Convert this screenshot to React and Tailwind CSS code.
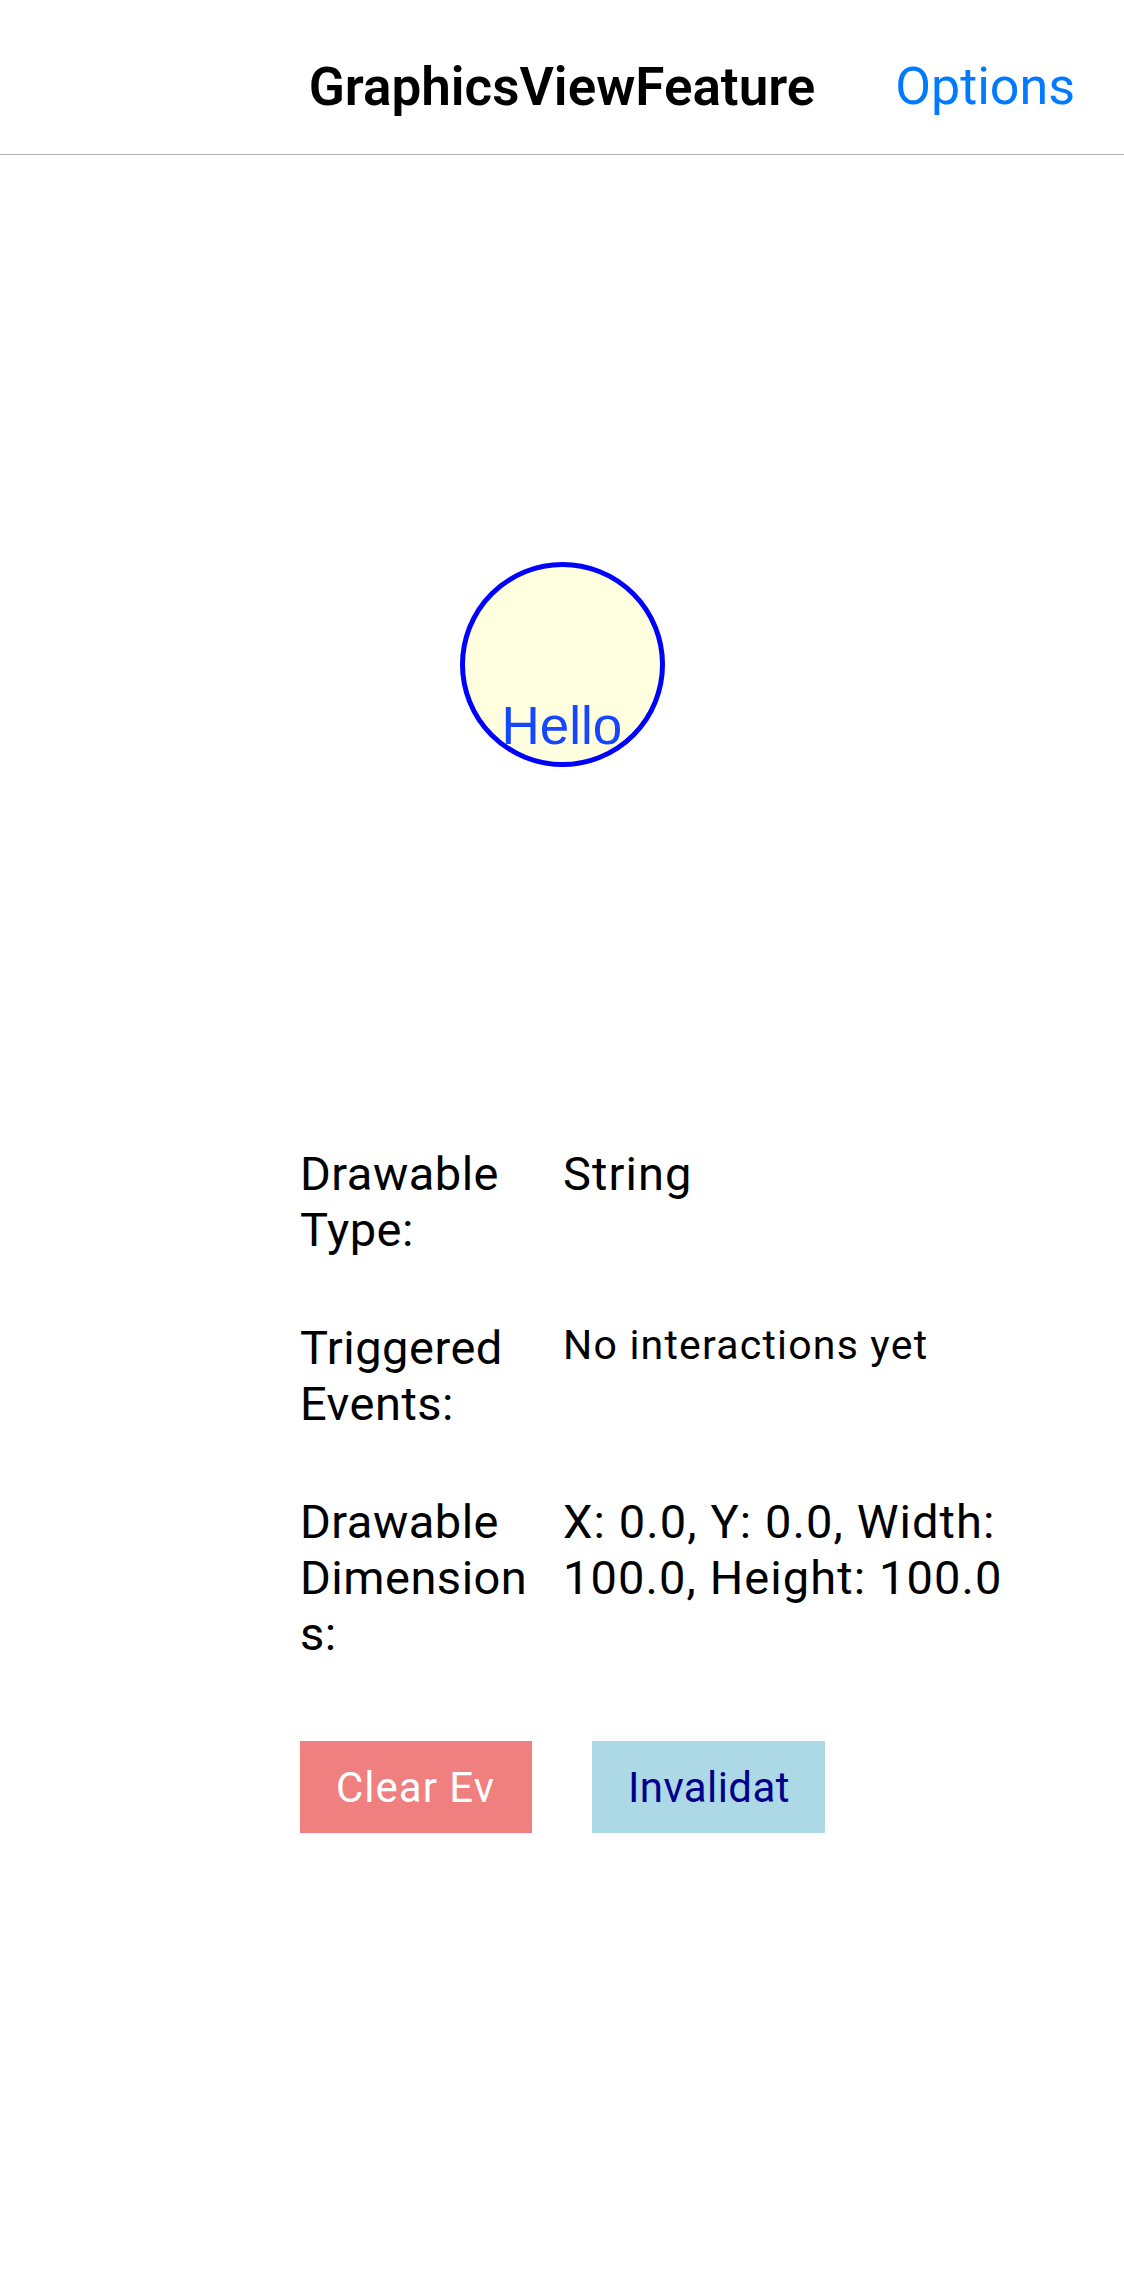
import React from 'react';

const rows = [
  { label: 'Drawable Type:', value: 'String', small: false },
  { label: 'Triggered Events:', value: 'No interactions yet', small: true },
  { label: 'Drawable Dimensions:', value: 'X: 0.0, Y: 0.0, Width: 100.0, Height: 100.0', small: false },
];

const App = () => {
  return (
    <div className="w-[1124px] h-[2286px] bg-white font-['Roboto','Liberation_Sans',sans-serif] text-black">
      {/* Navigation bar */}
      <header className="h-[155px] pt-[20px] border-b border-[#b0b0b0] grid grid-cols-[1fr_auto_1fr] items-center">
        <div />
        <h1 className="text-[53px] leading-none font-semibold">GraphicsViewFeature</h1>
        <button className="justify-self-end pr-[49px] text-[52px] leading-none text-[#007aff]">Options</button>
      </header>

      {/* Graphics view */}
      <div className="pt-[407px] flex justify-center">
        <div className="relative w-[205px] h-[205px]">
          <svg width="205" height="205" viewBox="0 0 205 205" className="block">
            <circle cx="102.5" cy="102.5" r="100" fill="#ffffe0" stroke="#0000ff" strokeWidth="5" />
          </svg>
          <span className="absolute left-[42px] top-[137px] text-[53px] leading-none text-[#1447ff] font-['Liberation_Sans',Arial,sans-serif]">
            Hello
          </span>
        </div>
      </div>

      {/* Info grid */}
      <div className="mt-[379px] ml-[300px] grid grid-cols-[235px_460px] gap-x-[28px] gap-y-[62px]">
        {rows.map((row) => (
          <React.Fragment key={row.label}>
            <div className="text-[47px] leading-[56px] tracking-[0.5px] [overflow-wrap:anywhere]">{row.label}</div>
            {row.small ? (
              <div className="text-[41px] leading-[48px] tracking-[1.2px] pt-[1px]">{row.value}</div>
            ) : (
              <div className="text-[47px] leading-[56px] tracking-[1.1px]">{row.value}</div>
            )}
          </React.Fragment>
        ))}
      </div>

      {/* Buttons */}
      <div className="mt-[79px] ml-[300px] flex gap-[60px]">
        <button className="w-[232px] h-[92px] px-[36px] bg-[#f08080] text-white text-[42px] tracking-[1px] text-left">
          <span className="block overflow-hidden whitespace-nowrap">Clear Events</span>
        </button>
        <button className="w-[233px] h-[92px] px-[36px] bg-[#add8e6] text-[#00008b] text-[42px] tracking-[0.4px] text-left">
          <span className="block overflow-hidden whitespace-nowrap">Invalidate</span>
        </button>
      </div>
    </div>
  );
};

export default App;
